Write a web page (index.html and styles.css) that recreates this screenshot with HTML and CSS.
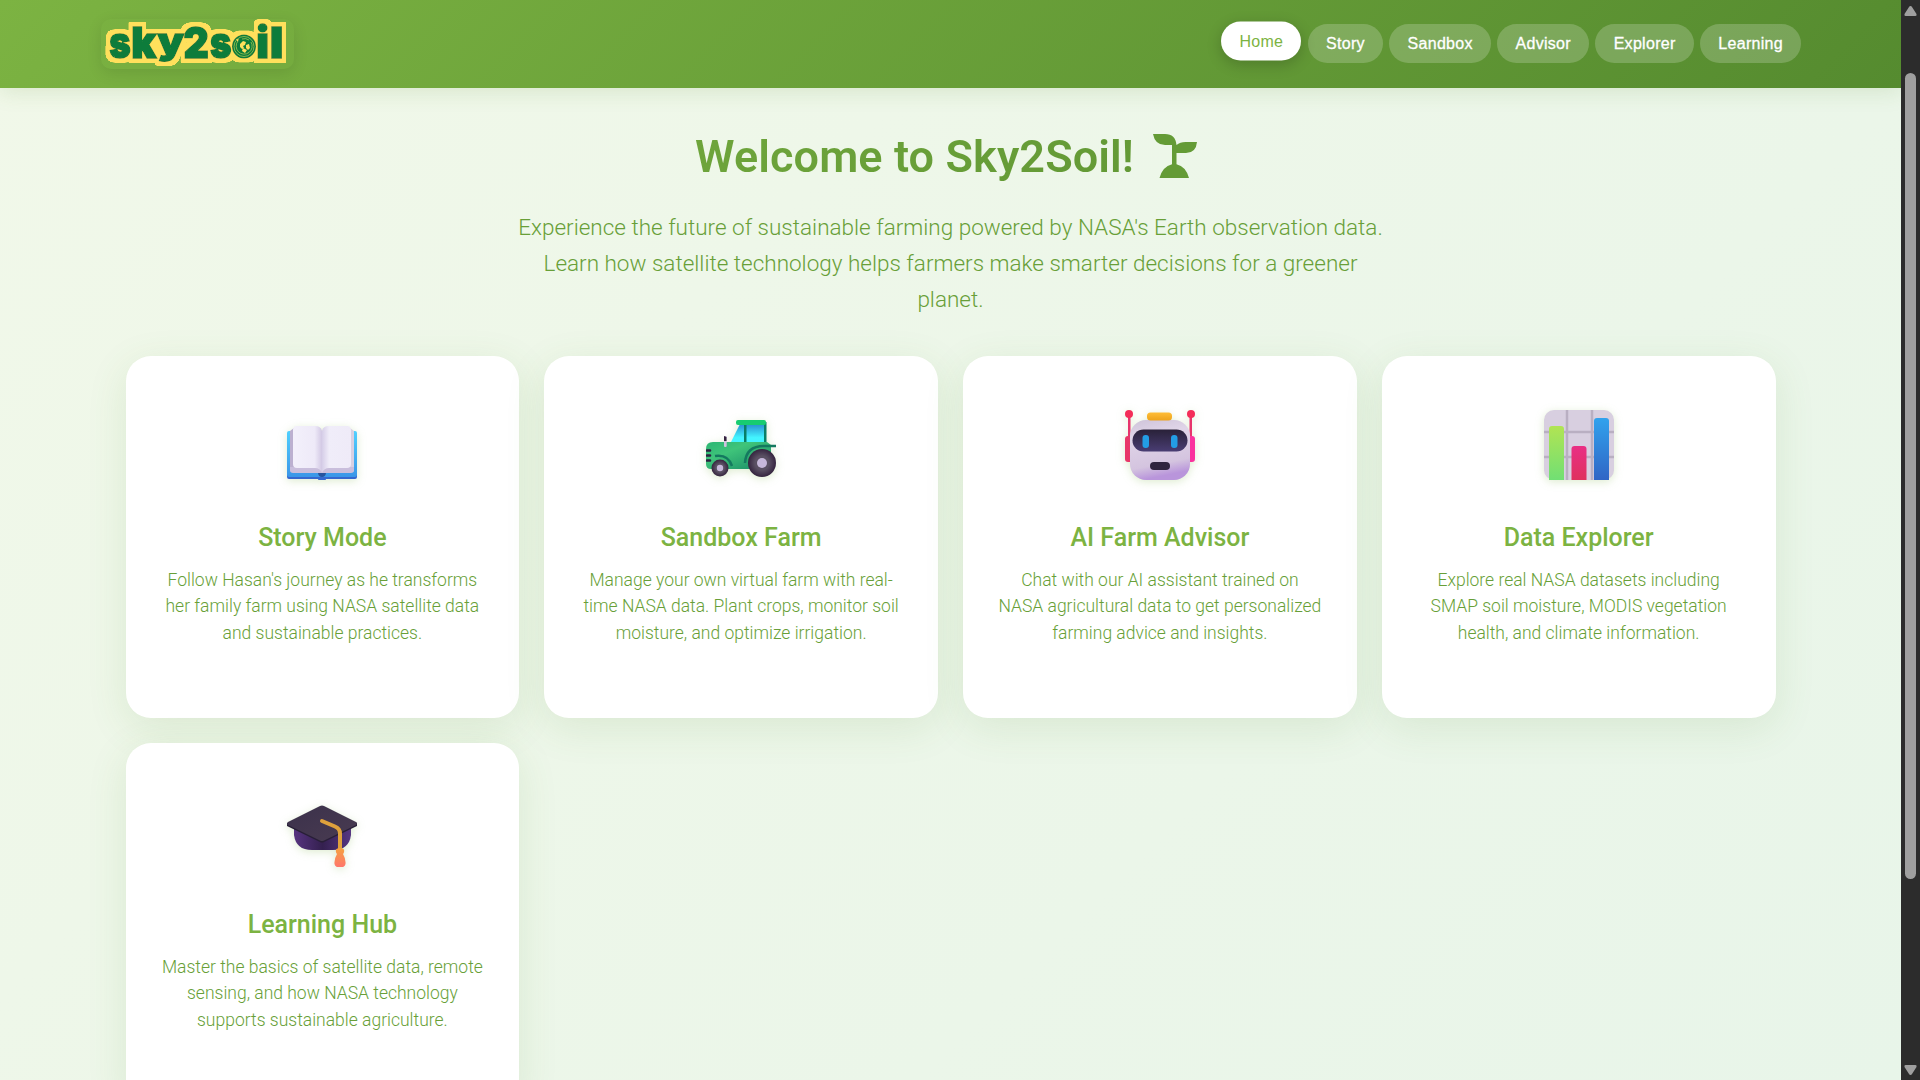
FILE: index.html
```html
<!DOCTYPE html>
<html lang="en">
<head>
<meta charset="utf-8">
<title>Sky2Soil</title>
<link rel="stylesheet" href="styles.css">
</head>
<body>
<div class="window">
<div class="page">
  <header class="header">
    <div class="header-inner">
      <svg class="logo" viewBox="0 0 193 50" role="img" aria-label="sky2soil">
        <defs>
          <filter id="outline" x="-10%" y="-30%" width="120%" height="160%">
            <feMorphology in="SourceAlpha" operator="dilate" radius="3.500" result="fat"/>
            <feGaussianBlur in="fat" stdDeviation=".7" result="soft"/>
            <feComponentTransfer in="soft" result="edge"><feFuncA type="linear" slope="2.500" intercept="-.7"/></feComponentTransfer>
            <feFlood flood-color="#ffe05c"/>
            <feComposite in2="edge" operator="in" result="yellow"/>
            <feMerge><feMergeNode in="yellow"/><feMergeNode in="SourceGraphic"/></feMerge>
          </filter>
        </defs>
        <g class="logo-fill" filter="url(#outline)">
          <text transform="translate(8.2 39) scale(.83 .98)">s</text>
          <text transform="translate(30.300 39) scale(.94 .98)">k</text>
          <text transform="translate(56.500 35) scale(.95 .84)">y</text>
          <text transform="translate(82.500 39) scale(.89 .96)">2</text>
          <text transform="translate(109 39) scale(.83 .98)">s</text>
          <circle cx="143" cy="27.500" r="11.200"/>
          <text transform="translate(155.300 39) scale(.98 .98)">i</text>
          <text transform="translate(168.700 39) scale(1.050 .98)">l</text>
        </g>
        <g fill="none" stroke="#b9cf55" stroke-width=".7">
          <circle cx="143" cy="27.500" r="10"/>
          <path d="M137 22a8 8 0 1 0 13 1M141 20a8 8 0 0 1 7 1"/>
        </g>
        <path fill="#ffe05c" d="M139 25l3-3 3 1-1 3-2 1 1 2-2 1-2-2zM145 26l3-1 1 4-2 2-2-2zM142 29l4 2-2 3-3-2zM135 20l3 .5-1.500 2z"/>
      </svg>
      <nav class="nav">
        <a class="nav-link active">Home</a>
        <a class="nav-link">Story</a>
        <a class="nav-link">Sandbox</a>
        <a class="nav-link">Advisor</a>
        <a class="nav-link">Explorer</a>
        <a class="nav-link">Learning</a>
      </nav>
    </div>
  </header>

  <main class="main">
    <section class="hero">
      <h1 class="title"><span>Welcome to Sky2Soil!</span>
        <svg class="sprout" viewBox="0 0 45 44"><path fill="#649b36" d="M0 0h12q10.500 0 11.500 11 3.500-3 9-3H44q-1 11-11 11H23.500v11.200Q33 32.500 36 44H6.500Q9.500 32.500 19 30.200V11H12Q2 11 0 0z"/></svg>
      </h1>
      <p class="lead">Experience the future of sustainable farming powered by NASA's Earth observation data. Learn how satellite technology helps farmers make smarter decisions for a greener planet.</p>
    </section>

    <section class="cards">
      <article class="card">
        <svg class="icon" viewBox="0 -6 70 70">
          <defs>
            <linearGradient id="cover" x2="0" y2="1"><stop stop-color="#50d0ff"/><stop offset="1" stop-color="#3a96e8"/></linearGradient>
            <linearGradient id="leaf"><stop stop-color="#f3f0fb"/><stop offset=".75" stop-color="#eeeaf8"/><stop offset="1" stop-color="#d2c8e4"/></linearGradient>
            <linearGradient id="leaf2"><stop stop-color="#d6cee8"/><stop offset=".25" stop-color="#f0edf9"/><stop offset="1" stop-color="#efebf8"/></linearGradient>
          </defs>
          <path fill="#3568cf" d="M0 58h70v3q0 2-2 2H39q-1 3-4 3t-4-3H2q-2 0-2-2z"/>
          <rect y="15" width="70" height="46" rx="2" fill="url(#cover)"/>
          <path fill="#bcb0d0" d="M3 15l4-3h26v44H5q-2 0-2-2z"/>
          <path fill="#d8d0e2" d="M37 12h26l4 3v39q0 2-2 2H37z"/>
          <path fill="#c9bedc" d="M3 51h64v3q0 3-3 3H6q-3 0-3-3z"/>
          <path fill="url(#leaf)" d="M6 14q0-4 4-4h18q6 0 7 5v42q-2-5-7-5H10q-4 0-4-4z"/>
          <path fill="url(#leaf2)" d="M35 15q1-5 7-5h18q4 0 4 4v34q0 4-4 4H42q-5 0-7 5z"/>
          <path fill="#27559f" d="M31 57h8q-.5 4-4 4t-4-4z"/>
        </svg>
        <h2 class="card-title">Story Mode</h2>
        <p class="card-text">Follow Hasan's journey as he transforms her family farm using NASA satellite data and sustainable practices.</p>
      </article>

      <article class="card">
        <svg class="icon" viewBox="0 -5 70 70">
          <defs>
            <linearGradient id="glass" x2="0" y2="1"><stop stop-color="#257fc8"/><stop offset=".65" stop-color="#43f4ff"/></linearGradient>
            <linearGradient id="body" x2="1" y2="1"><stop stop-color="#2bb673"/><stop offset=".35" stop-color="#3fc47a"/><stop offset="1" stop-color="#168866"/></linearGradient>
            <radialGradient id="tire"><stop offset=".5" stop-color="#5a5063"/><stop offset="1" stop-color="#35243f"/></radialGradient>
          </defs>
          <path fill="url(#glass)" d="M35 7h24v24H23z"/>
          <path fill="#087f67" d="M38 7h2.500v22H38zM58 7h2.500v24H58z"/>
          <path fill="url(#body)" d="M0 34q0-7 7-7h54l4 3v20H50v4H5q-5 0-5-5z"/>
          <rect x="30" y="5" width="30" height="5" rx="2" fill="#17cc70"/>
          <path fill="none" stroke="#14795f" stroke-width="2.500" d="M9 41q13-2 17 10M39 48q1-17 19-17h12"/>
          <circle cx="56" cy="48" r="14" fill="url(#tire)"/><circle cx="56" cy="48" r="5" fill="#c6b7da"/>
          <circle cx="14" cy="53" r="8.500" fill="url(#tire)"/><circle cx="14" cy="53" r="3.200" fill="#c6b7da"/>
          <rect x="18" y="21" width="2.700" height="11" rx="1" fill="#cfc2de"/><path fill="#35243f" d="M18 21l2.500 1v4H18z"/>
          <path stroke="#2c2140" stroke-width="2.600" stroke-linecap="round" d="M1 35.500h3M1 40.500h3M1 45.500h3"/>
        </svg>
        <h2 class="card-title">Sandbox Farm</h2>
        <p class="card-text">Manage your own virtual farm with real-time NASA data. Plant crops, monitor soil moisture, and optimize irrigation.</p>
      </article>

      <article class="card">
        <svg class="icon" viewBox="0 0 70 70">
          <defs>
            <linearGradient id="head" x2=".2" y2="1"><stop stop-color="#cfc4da"/><stop offset=".3" stop-color="#e0d5e8"/><stop offset=".8" stop-color="#d4c4df"/><stop offset="1" stop-color="#b995db"/></linearGradient>
            <linearGradient id="visor" x2="0" y2="1"><stop stop-color="#292138"/><stop offset="1" stop-color="#493d73"/></linearGradient>
            <linearGradient id="hat" x2="0" y2="1"><stop stop-color="#ffbd35"/><stop offset="1" stop-color="#eda31b"/></linearGradient>
          </defs>
          <path fill="#e7336c" d="M3 5h2.500v22H3zM64.500 5H67v22h-2.500z"/>
          <circle cx="4" cy="4" r="4" fill="#f42d59"/><circle cx="66" cy="4" r="4" fill="#f42d59"/>
          <rect y="26" width="10" height="26" rx="3" fill="#e83769"/><rect x="60" y="26" width="10" height="26" rx="3" fill="#fa329e"/>
          <rect x="5" y="10" width="60" height="60" rx="16" fill="url(#head)"/>
          <rect x="22" y="2.500" width="25" height="8" rx="3.500" fill="url(#hat)"/>
          <rect x="7.500" y="19.500" width="55" height="22" rx="11" fill="url(#visor)"/>
          <rect x="17.500" y="25" width="6.500" height="13" rx="3" fill="#239de4"/><rect x="46" y="25" width="6.500" height="13" rx="3" fill="#239de4"/>
          <rect x="25" y="52" width="20" height="8" rx="4" fill="#30243f"/>
        </svg>
        <h2 class="card-title">AI Farm Advisor</h2>
        <p class="card-text">Chat with our AI assistant trained on NASA agricultural data to get personalized farming advice and insights.</p>
      </article>

      <article class="card">
        <svg class="icon" viewBox="0 0 70 70">
          <defs>
            <linearGradient id="green" x2="0" y2="1"><stop stop-color="#b1e453"/><stop offset="1" stop-color="#71df74"/></linearGradient>
            <linearGradient id="pink" x2="0" y2="1"><stop stop-color="#e92f85"/><stop offset="1" stop-color="#df315e"/></linearGradient>
            <linearGradient id="blue" x2="0" y2="1"><stop stop-color="#31a2ed"/><stop offset="1" stop-color="#3165c5"/></linearGradient>
          </defs>
          <rect width="70" height="70" rx="10" fill="#d8cfe0"/>
          <path fill="none" stroke="#b9afc2" stroke-width="2.500" d="M0 22h70M0 47h70M23 0v70M48 0v70"/>
          <path fill="url(#green)" d="M5 70V19q0-3 3-3h9q3 0 3 3v51z"/>
          <path fill="url(#pink)" d="M27.500 70V39q0-3 3-3h9q3 0 3 3v31z"/>
          <path fill="url(#blue)" d="M50 70V11q0-3 3-3h9q3 0 3 3v59z"/>
        </svg>
        <h2 class="card-title">Data Explorer</h2>
        <p class="card-text">Explore real NASA datasets including SMAP soil moisture, MODIS vegetation health, and climate information.</p>
      </article>

      <article class="card">
        <svg class="icon" viewBox="0 -2 70 70">
          <defs>
            <linearGradient id="board" x2="1" y2="1"><stop stop-color="#3b314b"/><stop offset="1" stop-color="#493b51"/></linearGradient>
            <linearGradient id="cap"><stop stop-color="#573480"/><stop offset=".5" stop-color="#34204f"/><stop offset="1" stop-color="#563782"/></linearGradient>
            <linearGradient id="tassel" x2="0" y2="1"><stop stop-color="#f5a13e"/><stop offset="1" stop-color="#ff756d"/></linearGradient>
          </defs>
          <path fill="url(#cap)" d="M7 25h57v11q-2 15-18 15H25Q9 51 7 36z"/>
          <path fill="#281f37" d="M0 24v3l33 16q2 1 4 0l33-16v-3z"/>
          <path fill="url(#board)" d="M0 24.500q0-1 1-1.500L33 7q2-1 4 0l32 16q2 1 0 3L37 41.500q-2 1-4 0L1 26Q0 25.500 0 24.500z"/>
          <path fill="none" stroke="#dfa13c" stroke-width="4" stroke-linecap="round" stroke-linejoin="round" d="M35 22l13 5.500q5 2 5 7V52"/>
          <path fill="url(#tassel)" d="M49 53q-1-4 4-4t4 4q0 1-1 2 3 5 2.500 10-.5 3.500-5.500 3.500T47.500 65q-.5-5 2.500-10-1-1-1-2z"/>
        </svg>
        <h2 class="card-title">Learning Hub</h2>
        <p class="card-text">Master the basics of satellite data, remote sensing, and how NASA technology supports sustainable agriculture.</p>
      </article>
    </section>
  </main>
</div>
<div class="scrollbar">
  <svg class="arrow" viewBox="0 0 13 10"><path d="M6.500 0q1 0 1.500 1l4.500 7q.5 2-1 2h-10q-1.500 0-1-2L5 1q.5-1 1.500-1z"/></svg>
  <div class="track"><div class="thumb"></div></div>
  <svg class="arrow down" viewBox="0 0 13 10"><path d="M6.500 0q1 0 1.500 1l4.500 7q.5 2-1 2h-10q-1.500 0-1-2L5 1q.5-1 1.500-1z"/></svg>
</div>
</div>
</body>
</html>
```
FILE: styles.css
```css
* { box-sizing: border-box; }
body { margin: 0; height: 1080px; overflow: hidden; font-family: Roboto, "Liberation Sans", sans-serif; }
.window { display: flex; height: 1080px; }
.page { flex: 1; min-width: 0; height: 1080px; overflow: hidden; background: linear-gradient(135deg, #f1f8e9 0%, #e8f5e9 100%); }
.header { position: relative; height: 88px; padding: 0 100px 0 101px; background: linear-gradient(135deg, #7cb342 0%, #558b2f 100%); box-shadow: 0 4px 20px rgba(85, 139, 47, .15); }
.header-inner { display: flex; justify-content: space-between; align-items: center; height: 88px; }
.logo { width: 193px; height: 50px; overflow: visible; border-radius: 10px; box-shadow: 0 4px 15px rgba(0, 0, 0, .1); font: 900 44px Inter, sans-serif; }
.logo-fill { fill: #087c3b; stroke: #087c3b; stroke-width: 1.6px; }
.nav { display: flex; gap: 6.2px; margin-bottom: 1px; }
.nav-link { height: 39px; padding: 0 18px 0 18.500px; border-radius: 20px; background: rgba(255, 255, 255, .2); color: #fff; font: 500 16px/39px "Liberation Sans", Arial, sans-serif; letter-spacing: .3px; -webkit-text-stroke: .3px; }
.nav-link.active { background: #fff; color: #7cb342; transform: translateY(-2.5px); box-shadow: 0 4px 15px rgba(0, 0, 0, .2); -webkit-text-stroke: 0; }
.main { padding: 40px 125.5px 0; }
.hero { text-align: center; }
.title { display: flex; justify-content: center; align-items: center; gap: 19px; margin: 0 0 24px; padding-right: 8px; height: 57px; font-size: 45px; line-height: 57px; font-weight: 600; letter-spacing: .1px; }
.title span { background: linear-gradient(135deg, #7cb342, #558b2f); background-size: 1650px 57px; background-position: center; background-clip: text; -webkit-background-clip: text; color: transparent; }
.sprout { width: 45px; height: 44px; margin-bottom: 2px; }
.lead { width: 875px; margin: 0 auto 39px; color: #689f38; font-size: 22.5px; line-height: 36px; font-weight: 300; }
.cards { display: grid; grid-template-columns: repeat(4, 1fr); gap: 25px; }
.card { height: 362px; padding: 54px 35px 0; border-radius: 25px; background: #fff; text-align: center; box-shadow: 0 10px 40px rgba(85, 139, 47, .12); }
.icon { display: block; width: 70px; height: 70px; margin: 0 auto 41px; filter: drop-shadow(0 2px 4px rgba(124, 179, 66, .25)); }
.card-title { margin: 0 0 13px; color: #7cb342; font-size: 25px; line-height: 33px; font-weight: 500; }
.card-text { margin: 0; color: #689f38; font-size: 17.5px; line-height: 26.25px; font-weight: 300; }
.scrollbar { display: flex; flex-direction: column; align-items: center; justify-content: space-between; width: 19px; padding: 6px 0 5px; background: #2c2c2c; }
.arrow { width: 13px; height: 10px; fill: #9f9f9f; }
.arrow.down { transform: rotate(180deg); }
.track { flex: 1; padding-top: 57px; }
.thumb { width: 11px; height: 806px; border-radius: 6px; background: #9f9f9f; }
```
